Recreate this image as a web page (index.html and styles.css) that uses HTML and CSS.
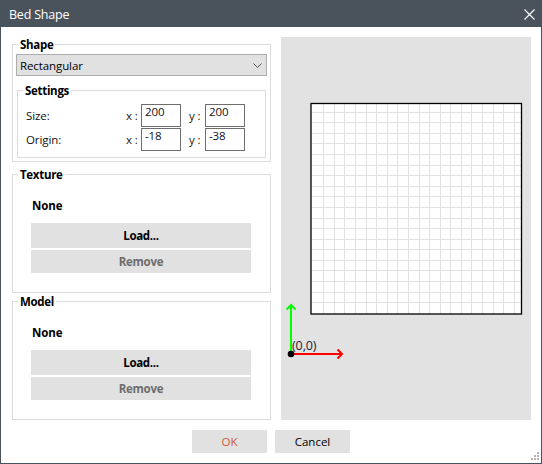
FILE: index.html
```html
<!DOCTYPE html>
<html>
<head>
<meta charset="utf-8">
<title>Bed Shape</title>
<link rel="stylesheet" href="styles.css">
</head>
<body>
<div class="window">
  <div class="titlebar">
    <span class="title">Bed Shape</span>
    <svg class="close" width="11" height="11" viewBox="0 0 11 11"><path d="M0.5 0.5 L10.5 10.5 M10.5 0.5 L0.5 10.5" stroke="#fff" stroke-width="1.1" fill="none"/></svg>
  </div>
  <div class="main">
    <div class="left">
      <fieldset class="group shape">
        <legend>Shape</legend>
        <div class="shape-inner">
          <div class="combo">
            <span>Rectangular</span>
            <svg width="9" height="5" viewBox="0 0 9 5"><path d="M0.5 0.5 L4.5 4.5 L8.5 0.5" stroke="#555" stroke-width="1" fill="none"/></svg>
          </div>
          <fieldset class="group settings">
            <legend>Settings</legend>
            <div class="settings-inner">
              <div class="row">
                <span class="lbl">Size:</span>
                <span class="ax">x :</span>
                <div class="field">200</div>
                <span class="ax ay">y :</span>
                <div class="field">200</div>
              </div>
              <div class="row">
                <span class="lbl">Origin:</span>
                <span class="ax">x :</span>
                <div class="field">-18</div>
                <span class="ax ay">y :</span>
                <div class="field">-38</div>
              </div>
            </div>
          </fieldset>
        </div>
      </fieldset>
      <fieldset class="group texture">
        <legend>Texture</legend>
        <div class="load-inner">
          <div class="none">None</div>
          <div class="wbtn">Load...</div>
          <div class="wbtn remove">Remove</div>
        </div>
      </fieldset>
      <fieldset class="group model">
        <legend>Model</legend>
        <div class="load-inner">
          <div class="none">None</div>
          <div class="wbtn">Load...</div>
          <div class="wbtn remove">Remove</div>
        </div>
      </fieldset>
    </div>
    <div class="canvas">
      <svg width="250" height="383" viewBox="0 0 250 383">
        <rect x="30" y="66.5" width="210.5" height="210.5" fill="#fff"/>
        <path stroke="#e2e2e2" stroke-width="1" fill="none" d="
          M42.5 67V277 M53.5 67V277 M63.5 67V277 M74.5 67V277 M85.5 67V277 M95.5 67V277 M106.5 67V277 M116.5 67V277 M127.5 67V277 M138.5 67V277
          M148.5 67V277 M159.5 67V277 M169.5 67V277 M180.5 67V277 M190.5 67V277 M201.5 67V277 M212.5 67V277 M222.5 67V277 M233.5 67V277
          M30 75.5H240 M30 85.5H240 M30 96.5H240 M30 106.5H240 M30 117.5H240 M30 128.5H240 M30 138.5H240 M30 149.5H240 M30 159.5H240 M30 170.5H240
          M30 181.5H240 M30 191.5H240 M30 202.5H240 M30 212.5H240 M30 223.5H240 M30 233.5H240 M30 244.5H240 M30 255.5H240 M30 265.5H240"/>
        <rect x="30" y="66.5" width="210.5" height="210.5" fill="none" stroke="#000" stroke-width="1.3"/>
        <path d="M10 317 V268 M5.5 272.5 L10 268 L14.5 272.5" stroke="#00ff00" stroke-width="2" fill="none"/>
        <path d="M10 317 H61 M56.5 312.5 L61 317 L56.5 321.5" stroke="#ff0000" stroke-width="2" fill="none"/>
        <circle cx="10" cy="317" r="3.3" fill="#000"/>
        <text x="11" y="313" class="origin-label">(0,0)</text>
      </svg>
    </div>
  </div>
  <div class="buttons">
    <button class="btn ok">OK</button>
    <button class="btn">Cancel</button>
  </div>
  <svg class="grip" width="10" height="10" viewBox="0 0 10 10">
    <rect x="7" y="0" width="2" height="2" fill="#b5b5b5"/>
    <rect x="4" y="3" width="2" height="2" fill="#b5b5b5"/>
    <rect x="7" y="3" width="2" height="2" fill="#b5b5b5"/>
    <rect x="1" y="6" width="2" height="2" fill="#b5b5b5"/>
    <rect x="4" y="6" width="2" height="2" fill="#b5b5b5"/>
    <rect x="7" y="6" width="2" height="2" fill="#b5b5b5"/>
  </svg>
</div>
</body>
</html>
```
FILE: styles.css
```css
* { box-sizing: border-box; }
html, body { margin: 0; padding: 0; background: #fff; }
body {
  font-family: "Open Sans", "Noto Sans", sans-serif;
  font-size: 11.5px;
  color: #000;
  letter-spacing: -0.1px;
}
.window {
  position: relative;
  width: 542px;
  height: 464px;
  border: 1px solid #4a535b;
  display: flex;
  flex-direction: column;
  background: #fff;
}
.titlebar {
  flex: none;
  height: 26px;
  background: #4a535b;
  color: #fff;
  display: flex;
  align-items: center;
  justify-content: space-between;
  padding: 0 6px 0 8px;
}
.title { font-size: 12.5px; letter-spacing: -0.2px; }
.close { display: block; }
.main {
  flex: none;
  height: 393px;
  display: flex;
  gap: 10px;
  padding: 10px 10px 0 11px;
}
.left {
  width: 259px;
  display: flex;
  flex-direction: column;
}
.group {
  margin: 0;
  padding: 0;
  min-width: 0;
  border: 1px solid #dcdcdc;
}
.group legend {
  margin-left: 5px;
  padding: 0 2px;
  height: 15px;
  line-height: 15px;
  font-weight: 700;
  letter-spacing: -0.3px;
}
.shape-inner { padding: 2px 3px 3px 3px; }
.combo {
  height: 22px;
  border: 1px solid #adadad;
  background: #e1e1e1;
  display: flex;
  align-items: center;
  justify-content: space-between;
  padding: 0 4px 0 3px;
}
.combo svg { display: block; }
.settings { margin: 7px 1px 0 1px; }
.settings-inner { padding: 6px 0 6px 8px; }
.row {
  display: flex;
  align-items: center;
  height: 23px;
}
.row + .row { margin-top: 1px; }
.lbl { width: 100px; color: #111; }
.ax { width: 15px; color: #222; }
.ay { width: 16px; margin-left: 8px; }
.field {
  width: 40px;
  height: 23px;
  border: 1px solid #6e6e6e;
  padding: 0 0 0 3px;
  line-height: 14px;
  color: #10101e;
}
.texture { margin-top: 5px; }
.model { margin-top: 1px; }
.load-inner { padding: 17px 19px 19px 18px; }
.none {
  font-weight: 700;
  line-height: 14px;
  height: 14px;
  margin-bottom: 10px;
  padding-left: 1px;
}
.wbtn {
  height: 25px;
  background: #e1e1e1;
  display: flex;
  align-items: center;
  justify-content: center;
  font-weight: 700;
  letter-spacing: -0.3px;
}
.remove {
  height: 23px;
  margin-top: 2px;
  color: #6d6d6d;
}
.canvas {
  width: 250px;
  height: 383px;
  background: #e2e2e2;
}
.canvas svg { display: block; }
.origin-label {
  font-family: "Open Sans", "Noto Sans", sans-serif;
  font-size: 12.5px;
  fill: #1c1c30;
}
.buttons {
  flex: none;
  display: flex;
  justify-content: center;
  gap: 8px;
  margin-top: 10px;
}
.btn {
  width: 75px;
  height: 23px;
  border: 0;
  margin: 0;
  padding: 0;
  background: #e1e1e1;
  font: inherit;
  color: #000;
}
.ok { color: #cf5a3a; }
.grip {
  position: absolute;
  right: 1px;
  bottom: 1px;
}
```
